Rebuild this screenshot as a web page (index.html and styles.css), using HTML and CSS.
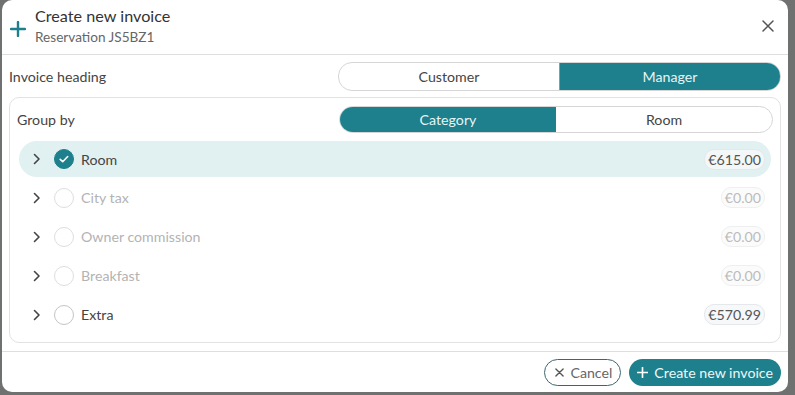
FILE: index.html
```html
<!DOCTYPE html>
<html lang="en">
<head>
    <meta charset="UTF-8">
    <meta name="viewport" content="width=device-width, initial-scale=1.0">
    <title>Create new invoice</title>
    <link rel="stylesheet" href="styles.css">
</head>
<body>
    <div class="modal">
        <!-- Header -->
        <div class="modal-header">
            <svg class="header-plus" width="16" height="16" viewBox="0 0 16 16">
                <path d="M8 1v14M1 8h14" stroke="#1d808c" stroke-width="2.4" stroke-linecap="round"/>
            </svg>
            <div class="header-text">
                <div class="title">Create new invoice</div>
                <div class="subtitle">Reservation JS5BZ1</div>
            </div>
            <svg class="close" width="12" height="12" viewBox="0 0 12 12">
                <path d="M1 1l10 10M11 1L1 11" stroke="#555" stroke-width="1.5" stroke-linecap="round"/>
            </svg>
        </div>

        <div class="modal-body">
            <div class="field-row">
                <span class="field-label">Invoice heading</span>
                <div class="switch switch-wide">
                    <div class="switch-opt">Customer</div>
                    <div class="switch-opt active outlined">Manager</div>
                </div>
            </div>

            <div class="group-box">
                <div class="field-row small">
                    <span class="field-label">Group by</span>
                    <div class="switch">
                        <div class="switch-opt active">Category</div>
                        <div class="switch-opt">Room</div>
                    </div>
                </div>

                <div class="lines">
                    <div class="line selected">
                        <svg class="chev" width="8" height="12" viewBox="0 0 8 12"><path d="M1.5 1.5l4.5 4.5-4.5 4.5" fill="none" stroke="#444" stroke-width="1.6" stroke-linecap="round" stroke-linejoin="round"/></svg>
                        <span class="check on">
                            <svg width="12" height="12" viewBox="0 0 12 12"><path d="M2.2 6.3l2.5 2.4 5-5.2" fill="none" stroke="#fff" stroke-width="1.6" stroke-linecap="round" stroke-linejoin="round"/></svg>
                        </span>
                        <span class="line-name">Room</span>
                        <span class="amount">€615.00</span>
                    </div>
                    <div class="line muted">
                        <svg class="chev" width="8" height="12" viewBox="0 0 8 12"><path d="M1.5 1.5l4.5 4.5-4.5 4.5" fill="none" stroke="#444" stroke-width="1.6" stroke-linecap="round" stroke-linejoin="round"/></svg>
                        <span class="check"></span>
                        <span class="line-name">City tax</span>
                        <span class="amount">€0.00</span>
                    </div>
                    <div class="line muted">
                        <svg class="chev" width="8" height="12" viewBox="0 0 8 12"><path d="M1.5 1.5l4.5 4.5-4.5 4.5" fill="none" stroke="#444" stroke-width="1.6" stroke-linecap="round" stroke-linejoin="round"/></svg>
                        <span class="check"></span>
                        <span class="line-name">Owner commission</span>
                        <span class="amount">€0.00</span>
                    </div>
                    <div class="line muted">
                        <svg class="chev" width="8" height="12" viewBox="0 0 8 12"><path d="M1.5 1.5l4.5 4.5-4.5 4.5" fill="none" stroke="#444" stroke-width="1.6" stroke-linecap="round" stroke-linejoin="round"/></svg>
                        <span class="check"></span>
                        <span class="line-name">Breakfast</span>
                        <span class="amount">€0.00</span>
                    </div>
                    <div class="line">
                        <svg class="chev" width="8" height="12" viewBox="0 0 8 12"><path d="M1.5 1.5l4.5 4.5-4.5 4.5" fill="none" stroke="#444" stroke-width="1.6" stroke-linecap="round" stroke-linejoin="round"/></svg>
                        <span class="check dark"></span>
                        <span class="line-name">Extra</span>
                        <span class="amount">€570.99</span>
                    </div>
                </div>
            </div>
        </div>

        <!-- Footer -->
        <div class="modal-footer">
            <button class="btn btn-cancel">
                <svg width="9" height="9" viewBox="0 0 10 10"><path d="M1 1l8 8M9 1L1 9" stroke="#555" stroke-width="1.5" stroke-linecap="round"/></svg>
                Cancel
            </button>
            <button class="btn btn-primary">
                <svg width="11" height="11" viewBox="0 0 12 12"><path d="M6 0.5v11M0.5 6h11" stroke="#fff" stroke-width="1.8" stroke-linecap="round"/></svg>
                Create new invoice
            </button>
        </div>
    </div>
</body>
</html>
```

FILE: styles.css
```css
/* Page behind the modal */
body {
    margin: 0;
    background-color: #6f7070;
    font-family: Lato, "Open Sans", sans-serif;
    color: #3d3d3d;
}

.modal {
    width: 786px;
    height: 392px;
    margin-left: 2px;
    background-color: white;
    border-radius: 10px;
    display: flex;
    flex-direction: column;
}

/* Header */
.modal-header {
    flex-shrink: 0;
    height: 55px;
    border-bottom: 1px solid #dedede;
    display: flex;
    align-items: center;
    padding: 0 14px 0 8px;
    box-sizing: border-box;
}

.header-plus {
    margin-right: 9px;
    margin-top: 4px;
}

.header-text {
    flex: 1;
    margin-top: -2px;
}

.title {
    font-size: 16.2px;
    color: #333;
    line-height: 22px;
}

.subtitle {
    font-size: 13.6px;
    color: #666;
    line-height: 20px;
}

.close {
    margin-top: -2px;
}

/* Body */
.modal-body {
    flex-shrink: 0;
    padding: 0 7px;
}

.field-row {
    display: flex;
    align-items: center;
    justify-content: space-between;
    height: 42px;
}

.field-row.small {
    padding-left: 7px;
}

.field-label {
    font-size: 14.2px;
    color: #444;
}

.switch {
    display: flex;
    width: 434px;
    height: 27px;
    border: 1px solid #d6d6d6;
    border-radius: 14px;
    overflow: hidden;
    box-sizing: border-box;
}

.group-box .switch {
    margin-right: -2px;
}

.switch-wide {
    width: 443px;
    height: 29px;
}

.switch-opt {
    flex: 1;
    display: flex;
    align-items: center;
    justify-content: center;
    font-size: 14.2px;
    color: #444;
}

.switch-opt.active {
    background-color: #1d808c;
    color: #e8f4f5;
}

.switch-opt.outlined {
    border: 1.5px solid #4cb4c0;
    border-radius: 0 14px 14px 0;
    margin: -1px -1px -1px 0;
}

.group-box {
    border: 1px solid #e2e2e2;
    border-radius: 10px;
    padding-right: 9px;
    height: 246px;
    box-sizing: border-box;
}

.lines {
    display: flex;
    flex-direction: column;
    padding-left: 9px;
    margin-top: 1px;
}

.line {
    height: 39px;
    display: flex;
    align-items: center;
    padding-right: 6px;
    border-radius: 18px;
}

.line.selected {
    height: 36px;
    margin-bottom: 1px;
    background-color: #e1f0f1;
}

.chev {
    margin: 0 13px 0 14px;
}

.check {
    width: 20px;
    height: 20px;
    border-radius: 50%;
    border: 1.5px solid #dedede;
    box-sizing: border-box;
    display: flex;
    align-items: center;
    justify-content: center;
    margin-right: 7px;
}

.check.on {
    background-color: #1d808c;
    border-color: #1d808c;
}

.check.dark {
    border-color: #c4c4c4;
}

.line-name {
    flex: 1;
    font-size: 14.2px;
    color: #444;
}

.line.muted .line-name {
    color: #b3b3b3;
}

.amount {
    font-size: 14.2px;
    color: #555;
    border: 1px solid #e4e8ea;
    background-color: #f6f8f9;
    border-radius: 10px;
    padding: 1px 3px;
}

.line.selected .amount {
    background-color: #f4f7f8;
}

.line.muted .amount {
    color: #bbb;
    background-color: #fbfbfb;
    border-color: #eef0f0;
}

/* Footer */
.modal-footer {
    flex-shrink: 0;
    height: 41px;
    margin-top: 8px;
    border-top: 1px solid #dedede;
    box-sizing: border-box;
    display: flex;
    justify-content: flex-end;
    align-items: center;
    gap: 8px;
    padding: 1px 7px 0 0;
}

.btn {
    height: 27px;
    border-radius: 14px;
    font-family: Lato, "Open Sans", sans-serif;
    font-size: 14.2px;
    display: flex;
    align-items: center;
    gap: 6px;
    padding: 0 8px 0 10px;
    cursor: pointer;
}

.btn-cancel {
    background: white;
    border: 1px solid #3c6770;
    color: #666;
}

.btn-primary {
    background-color: #1d808c;
    border: none;
    color: #eef7f8;
    padding-left: 8px;
}
```
